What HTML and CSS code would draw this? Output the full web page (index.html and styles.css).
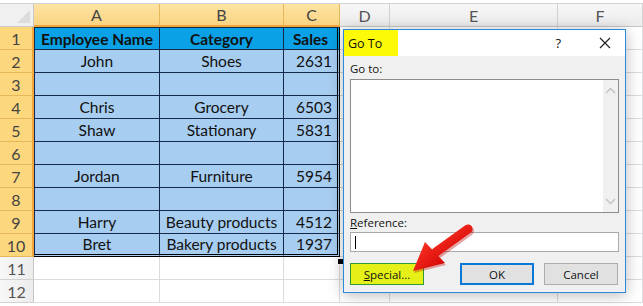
FILE: index.html
```html
<!DOCTYPE html>
<html lang="en">
<head>
  <meta charset="UTF-8">
  <title>Go To</title>
  <link rel="stylesheet" href="styles.css">
</head>
<body>
  <div class="sheet">
    <div class="corner"><span class="tri"></span></div>
    <div class="ch sel">A</div><div class="ch sel">B</div><div class="ch sel">C</div>
    <div class="ch">D</div><div class="ch">E</div><div class="ch">F</div>

    <div class="rh sel">1</div>
    <div class="t head first">Employee Name</div><div class="t head">Category</div><div class="t head last">Sales</div>
    <div class="c"></div><div class="c"></div><div class="c"></div>

    <div class="rh sel">2</div>
    <div class="t first">John</div><div class="t">Shoes</div><div class="t last num">2631</div>
    <div class="c"></div><div class="c"></div><div class="c"></div>

    <div class="rh sel">3</div>
    <div class="t first"></div><div class="t"></div><div class="t last"></div>
    <div class="c"></div><div class="c"></div><div class="c"></div>

    <div class="rh sel">4</div>
    <div class="t first">Chris</div><div class="t">Grocery</div><div class="t last num">6503</div>
    <div class="c"></div><div class="c"></div><div class="c"></div>

    <div class="rh sel">5</div>
    <div class="t first">Shaw</div><div class="t">Stationary</div><div class="t last num">5831</div>
    <div class="c"></div><div class="c"></div><div class="c"></div>

    <div class="rh sel">6</div>
    <div class="t first"></div><div class="t"></div><div class="t last"></div>
    <div class="c"></div><div class="c"></div><div class="c"></div>

    <div class="rh sel">7</div>
    <div class="t first">Jordan</div><div class="t">Furniture</div><div class="t last num">5954</div>
    <div class="c"></div><div class="c"></div><div class="c"></div>

    <div class="rh sel">8</div>
    <div class="t first"></div><div class="t"></div><div class="t last"></div>
    <div class="c"></div><div class="c"></div><div class="c"></div>

    <div class="rh sel">9</div>
    <div class="t first">Harry</div><div class="t">Beauty products</div><div class="t last num">4512</div>
    <div class="c"></div><div class="c"></div><div class="c"></div>

    <div class="rh sel">10</div>
    <div class="t first bottom">Bret</div><div class="t bottom">Bakery products</div><div class="t last bottom num">1937</div>
    <div class="c"></div><div class="c"></div><div class="c"></div>

    <div class="rh">11</div>
    <div class="c"></div><div class="c"></div><div class="c"></div>
    <div class="c"></div><div class="c"></div><div class="c"></div>

    <div class="rh">12</div>
    <div class="c"></div><div class="c"></div><div class="c"></div>
    <div class="c"></div><div class="c"></div><div class="c"></div>

    <span class="handle"></span>
  </div>

  <div class="dialog">
    <div class="titlebar">
      <span class="title">Go To</span>
      <span class="help">?</span>
      <span class="close">
        <svg width="12" height="12" viewBox="0 0 12 12"><path d="M1 1L11 11M11 1L1 11" stroke="#222" stroke-width="1.2" fill="none"/></svg>
      </span>
    </div>
    <div class="body">
      <div class="label">Go to:</div>
      <div class="list">
        <div class="scroll">
          <svg width="11" height="7" viewBox="0 0 11 7"><path d="M1 6L5.5 1.5L10 6" stroke="#c2c2c2" stroke-width="1.5" fill="none"/></svg>
          <svg width="11" height="7" viewBox="0 0 11 7"><path d="M1 1L5.5 5.5L10 1" stroke="#c2c2c2" stroke-width="1.5" fill="none"/></svg>
        </div>
      </div>
      <div class="label ref"><u>R</u>eference:</div>
      <div class="input"><span class="caret"></span></div>
      <div class="buttons">
        <button class="btn special"><u>S</u>pecial...</button>
        <button class="btn ok">OK</button>
        <button class="btn">Cancel</button>
      </div>
    </div>
  </div>

  <svg class="arrow" width="80" height="62" viewBox="0 0 80 62">
    <defs>
      <linearGradient id="red" x1="0" y1="0" x2="1" y2="1">
        <stop offset="0" stop-color="#ff3a2a"/>
        <stop offset="1" stop-color="#d00000"/>
      </linearGradient>
    </defs>
    <path d="M36 32L68 9" stroke="#b80000" stroke-width="10" stroke-linecap="round" opacity="0.35" transform="translate(1 2)"/>
    <path d="M36 32L68 9" stroke="url(#red)" stroke-width="9" stroke-linecap="round"/>
    <polygon points="13,51 25,22 45,43" fill="#b80000" opacity="0.35" transform="translate(1 2)"/>
    <polygon points="13,51 25,22 45,43" fill="url(#red)"/>
  </svg>
</body>
</html>
```

FILE: styles.css
```css
body { margin: 0; background: #fff; font-family: "Lato", "Liberation Sans", sans-serif; overflow: hidden; }

.sheet { position: relative; margin-top: 3px; border-top: 1px solid #cfd2d6; display: grid; grid-template-columns: 34px 126px 124px 56px 50px 168px 85px; grid-template-rows: repeat(13, 23px); }
.sheet > div { box-sizing: border-box; display: flex; align-items: center; justify-content: center; font-size: 15.5px; color: #111; white-space: nowrap; }

.corner { background: #f0f0f0; border-right: 1px solid #c9c9c9; border-bottom: 1px solid #c9c9c9; position: relative; }
.tri { position: absolute; right: 3px; bottom: 3px; width: 0; height: 0; border-left: 13px solid transparent; border-bottom: 13px solid #dcdcdc; }

.ch { background: linear-gradient(#f7f7f7, #ececec); border-right: 1px solid #d2d2d2; border-bottom: 1px solid #c6c6c6; color: #555 !important; font-size: 16px !important; }
.ch.sel { background: linear-gradient(#fde4a3, #fbd483); border-right: 1px solid #e6b85a; border-bottom: 2px solid #f2a53a; color: #444 !important; }

.rh { background: linear-gradient(90deg, #f7f7f7, #ececec); border-right: 1px solid #c6c6c6; border-bottom: 1px solid #d2d2d2; color: #555 !important; font-size: 16px !important; }
.rh.sel { background: #fdd77e; border-right: 2px solid #f2a53a; border-bottom: 1px solid #e6b85a; color: #444 !important; }

.c { border-right: 1px solid #dadcdd; border-bottom: 1px solid #dadcdd; }

.t { background: #a7cdf0; border-right: 1px solid #17294a; border-bottom: 1px solid #17294a; }
.t.head { background: #0aa1e6; font-weight: bold; border-top: 1px solid #17294a; }
.t.first { border-left: 1px solid #17294a; }
.t.last { border-right: 3px double #000; }
.t.num { justify-content: flex-end; padding-right: 5px; }
.t.bottom { border-bottom: 3px double #000; }
.handle { position: absolute; left: 337px; top: 254px; width: 5px; height: 5px; background: #000; border: 1px solid #fff; }

.dialog { position: absolute; left: 343px; top: 29px; width: 283px; height: 264px; box-sizing: border-box; border: 1px solid #2b8ad9; background: #f0f0f0; box-shadow: 0 2px 14px rgba(0,0,0,0.28); font-family: "Open Sans", "Noto Sans", sans-serif; font-size: 11.5px; color: #111; display: flex; flex-direction: column; }
.titlebar { height: 26px; background: #fff; display: flex; align-items: center; }
.title { align-self: stretch; width: 54px; background: #fdfa08; display: flex; align-items: center; padding-left: 4px; box-sizing: border-box; font-size: 12.5px; }
.help { margin-left: auto; margin-right: 38px; font-size: 13px; }
.close { margin-right: 14px; display: flex; }

.body { padding: 5px 6px 0; display: flex; flex-direction: column; }
.label { height: 16px; line-height: 16px; }
.list { margin-top: 2px; height: 134px; box-sizing: border-box; border: 1px solid #8c8c8c; background: #fff; display: flex; justify-content: flex-end; }
.scroll { width: 15px; background: #f0f0f0; display: flex; flex-direction: column; justify-content: space-between; align-items: center; padding: 7px 0 7px; }
.label.ref { margin-top: 2px; }
.input { margin-top: 1px; height: 20px; box-sizing: border-box; border: 1px solid #a9a9a9; background: #fff; display: flex; align-items: center; padding-left: 4px; }
.caret { width: 1px; height: 13px; background: #000; }

.buttons { margin-top: 11px; display: flex; }
.btn { width: 74px; height: 22px; box-sizing: border-box; font: inherit; color: #111; background: #e1e1e1; border: 1px solid #adadad; padding: 0; }
.btn.special { background: #e4f018; border-color: #2f9a3a; margin-right: 36px; }
.btn.ok { border: 2px solid #0a78d7; margin-right: 10px; }

.arrow { position: absolute; left: 400px; top: 220px; }
```
